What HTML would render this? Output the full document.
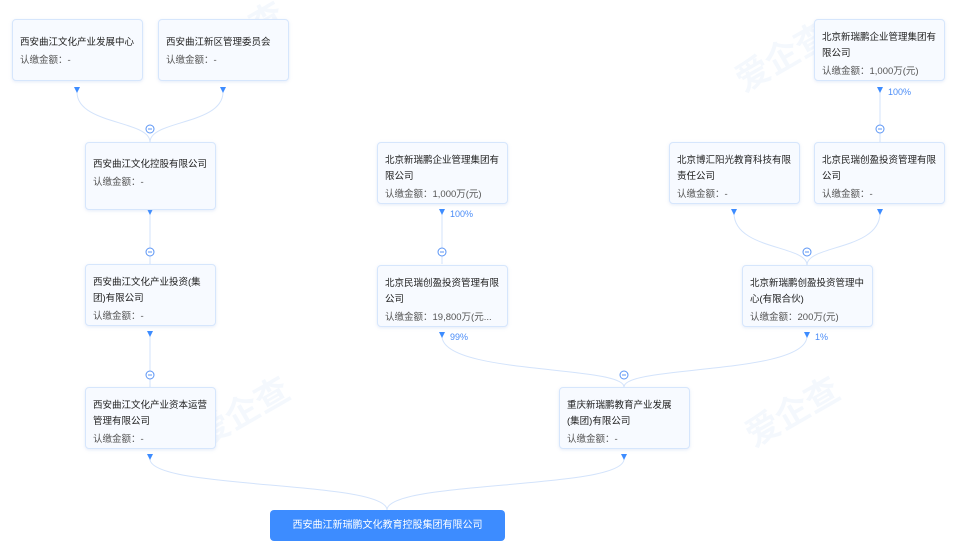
<!DOCTYPE html>
<html><head><meta charset="utf-8"><style>
*{margin:0;padding:0;box-sizing:border-box}
body{width:957px;height:546px;background:#fff;position:relative;overflow:hidden;font-family:"Liberation Sans","Noto Sans CJK SC",sans-serif}
.b{position:absolute;width:131px;background:#f7faff;border:1px solid #d6e6fc;border-radius:4px;padding:10px 7px 0 7px;font-size:9.5px;color:#222;line-height:16px;box-shadow:0 1px 3px rgba(150,180,230,.25)}
.b .m{color:#555;margin-top:2px}
.pc{position:absolute;font-size:9px;color:#4a8cf7}
svg{position:absolute;left:0;top:0}
.btn{position:absolute;left:270px;top:510px;width:235px;height:31px;background:#3d8cff;border-radius:4px;color:#fff;font-size:10px;text-align:center;line-height:31px}
.wm{position:absolute;font-size:34px;font-weight:bold;color:rgba(120,160,230,.08);transform:rotate(-30deg)}
</style></head><body>
<div class="wm" style="left:185px;top:10px">爱企查</div>
<div class="wm" style="left:730px;top:30px">爱企查</div>
<div class="wm" style="left:190px;top:385px">爱企查</div>
<div class="wm" style="left:740px;top:385px">爱企查</div>
<svg width="957" height="546" fill="none" stroke="#d3e3fb" stroke-width="1">
<path d="M77 92 C77 125 150 120 150 142"/>
<path d="M223 92 C223 125 150 120 150 142"/>
<path d="M150 214 V264"/>
<path d="M150 336 V387"/>
<path d="M442 214 V264"/>
<path d="M880 91 V142"/>
<path d="M734 213 C734 250 807 245 807 265"/>
<path d="M880 213 C880 250 807 245 807 265"/>
<path d="M442 336 C442 375 624 365 624 387"/>
<path d="M807 336 C807 375 624 365 624 387"/>
<path d="M150 459 C150 490 387 480 387 510"/>
<path d="M624 459 C624 490 387 480 387 510"/>
<g fill="#fff" stroke="#5b95f5">
<circle cx="150" cy="129" r="4"/><circle cx="150" cy="252" r="4"/><circle cx="150" cy="375" r="4"/>
<circle cx="442" cy="252" r="4"/><circle cx="880" cy="129" r="4"/><circle cx="807" cy="252" r="4"/><circle cx="624" cy="375" r="4"/>
</g>
<g stroke="#5b95f5"><path d="M148 129h4M148 252h4M148 375h4M440 252h4M878 129h4M805 252h4M622 375h4"/></g>
<g fill="#3d8cff" stroke="none">
<path d="M74 87h6l-3 6z"/><path d="M220 87h6l-3 6z"/><path d="M147 209h6l-3 6z"/><path d="M147 331h6l-3 6z"/>
<path d="M439 209h6l-3 6z"/><path d="M877 87h6l-3 6z"/><path d="M731 209h6l-3 6z"/><path d="M877 209h6l-3 6z"/>
<path d="M439 332h6l-3 6z"/><path d="M804 332h6l-3 6z"/><path d="M147 454h6l-3 6z"/><path d="M621 454h6l-3 6z"/>
</g>
</svg>
<div class="b" style="left:12px;top:19px;height:62px;padding-top:15px">西安曲江文化产业发展中心<div class="m">认缴金额：-</div></div>
<div class="b" style="left:158px;top:19px;height:62px;padding-top:15px">西安曲江新区管理委员会<div class="m">认缴金额：-</div></div>
<div class="b" style="left:85px;top:142px;height:68px;padding-top:14px">西安曲江文化控股有限公司<div class="m">认缴金额：-</div></div>
<div class="b" style="left:85px;top:264px;height:62px">西安曲江文化产业投资(集团)有限公司<div class="m">认缴金额：-</div></div>
<div class="b" style="left:85px;top:387px;height:62px">西安曲江文化产业资本运营管理有限公司<div class="m">认缴金额：-</div></div>
<div class="b" style="left:377px;top:142px;height:62px">北京新瑞鹏企业管理集团有限公司<div class="m">认缴金额：1,000万(元)</div></div>
<div class="b" style="left:377px;top:265px;height:62px">北京民瑞创盈投资管理有限公司<div class="m">认缴金额：19,800万(元...</div></div>
<div class="b" style="left:669px;top:142px;height:62px">北京博汇阳光教育科技有限责任公司<div class="m">认缴金额：-</div></div>
<div class="b" style="left:814px;top:142px;height:62px">北京民瑞创盈投资管理有限公司<div class="m">认缴金额：-</div></div>
<div class="b" style="left:814px;top:19px;height:62px">北京新瑞鹏企业管理集团有限公司<div class="m">认缴金额：1,000万(元)</div></div>
<div class="b" style="left:742px;top:265px;height:62px">北京新瑞鹏创盈投资管理中心(有限合伙)<div class="m">认缴金额：200万(元)</div></div>
<div class="b" style="left:559px;top:387px;height:62px">重庆新瑞鹏教育产业发展(集团)有限公司<div class="m">认缴金额：-</div></div>
<div class="pc" style="left:450px;top:209px">100%</div>
<div class="pc" style="left:888px;top:87px">100%</div>
<div class="pc" style="left:450px;top:332px">99%</div>
<div class="pc" style="left:815px;top:332px">1%</div>
<div class="btn">西安曲江新瑞鹏文化教育控股集团有限公司</div>
</body></html>
